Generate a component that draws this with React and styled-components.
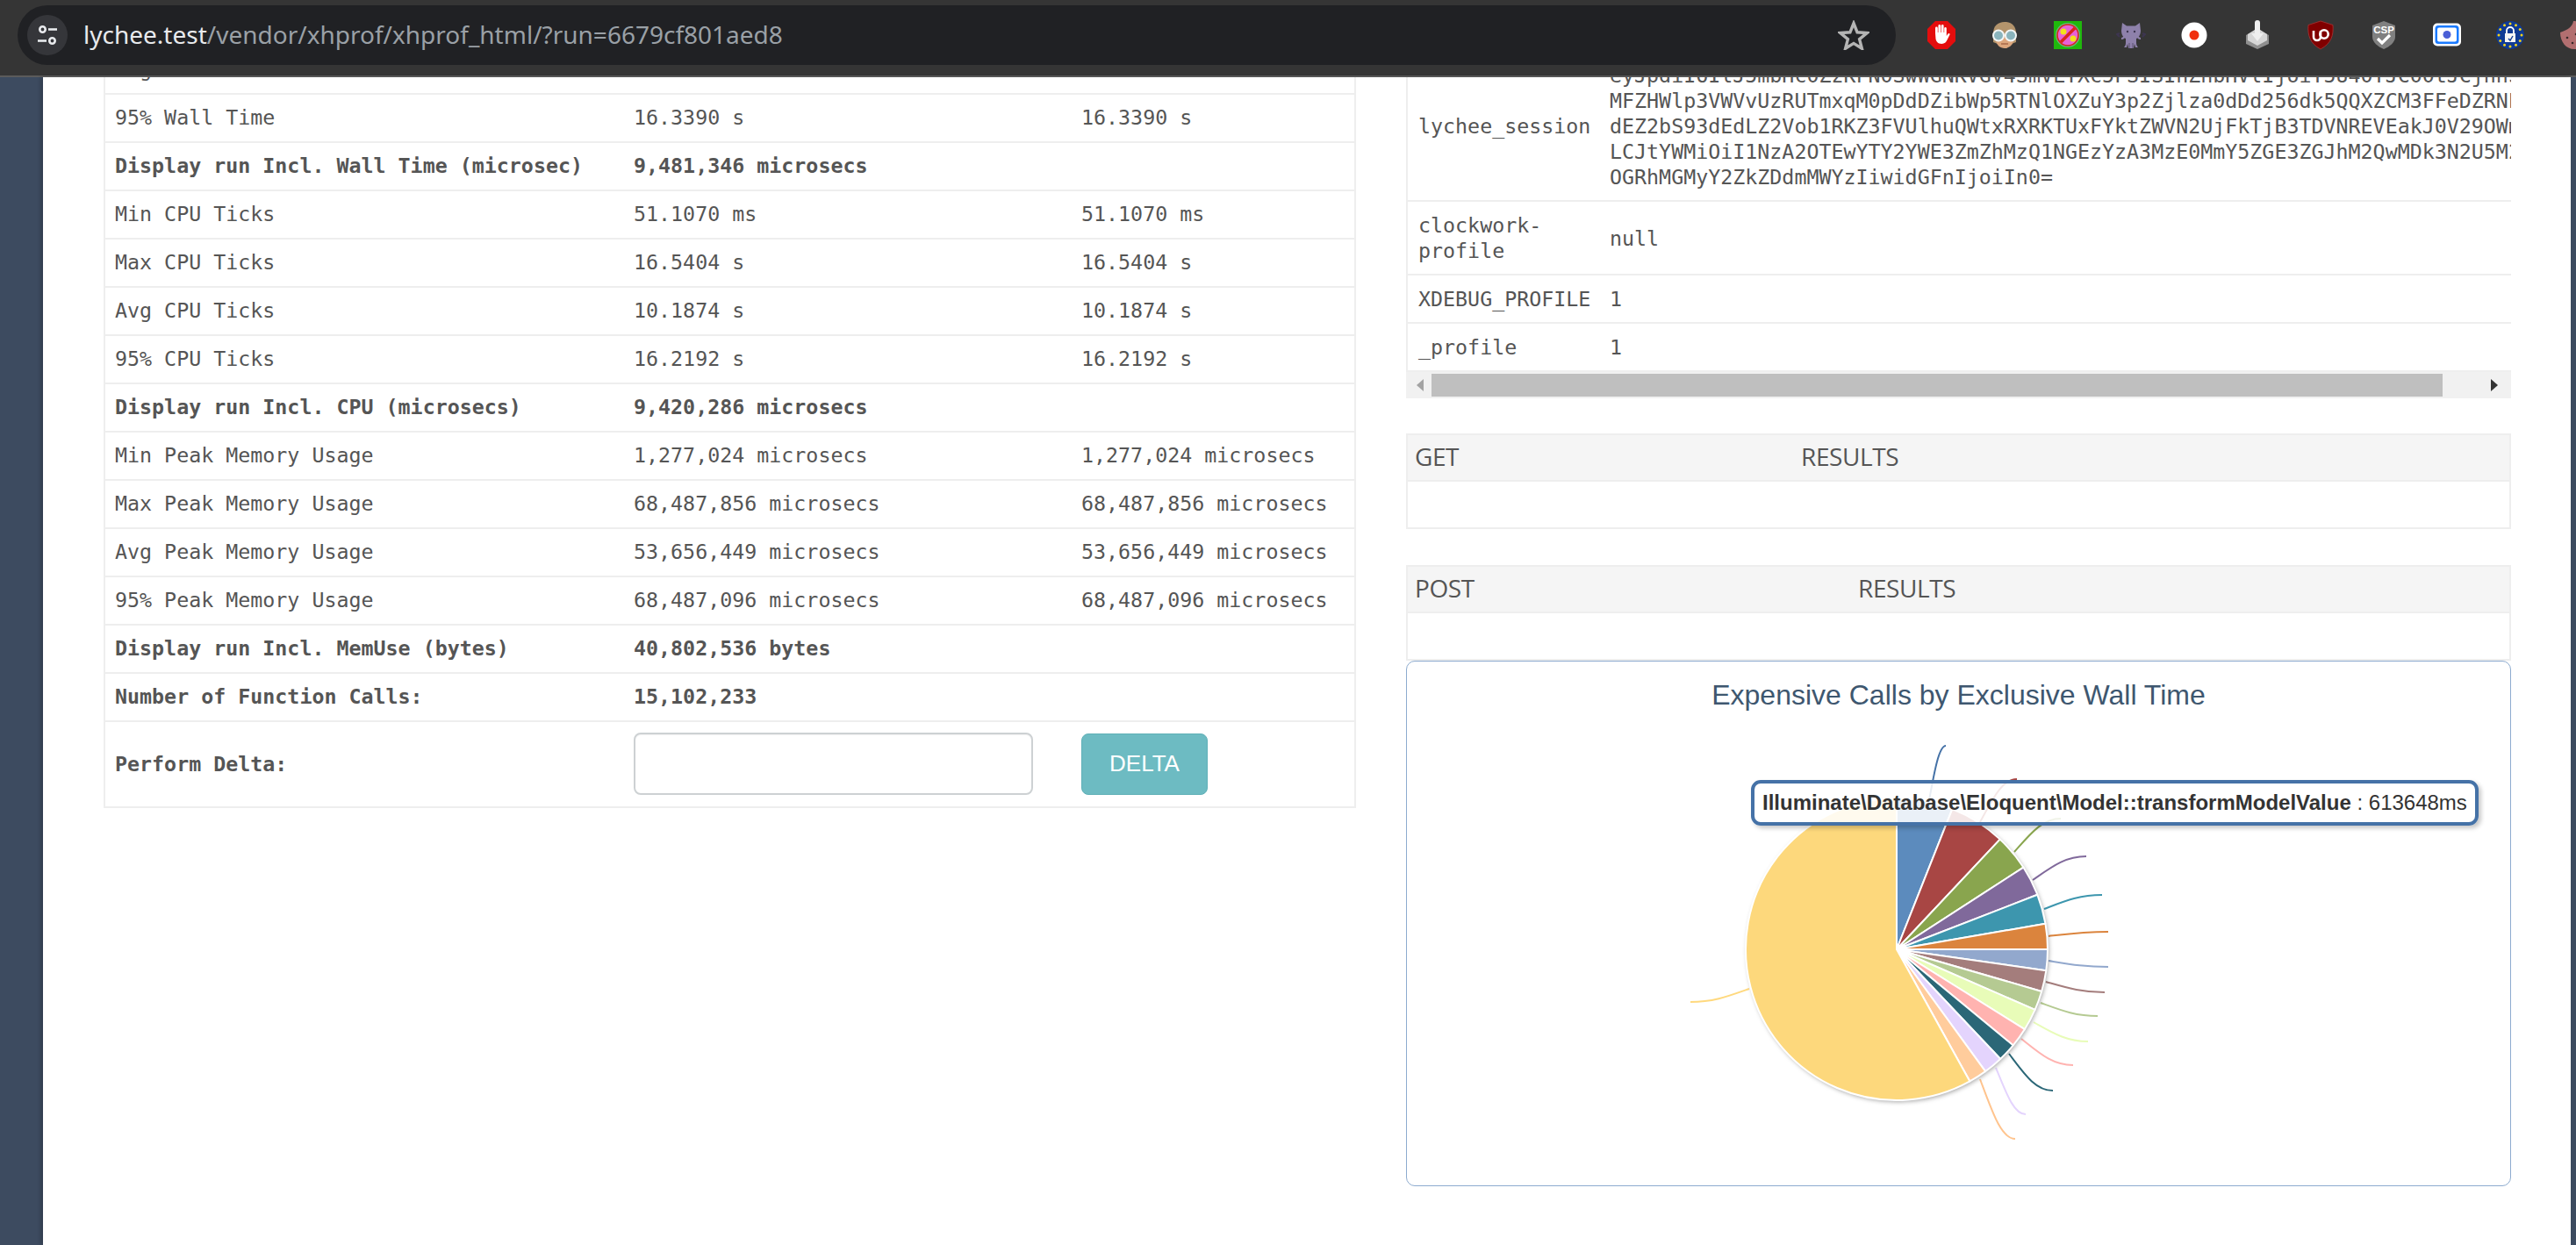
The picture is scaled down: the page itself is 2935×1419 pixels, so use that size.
import React from "react";
import styled, { createGlobalStyle } from "styled-components";

const GlobalStyle = createGlobalStyle`
  html, body { margin: 0; padding: 0; background: #fff; overflow: hidden; }
  * { box-sizing: border-box; }
`;

const MONO = `"DejaVu Sans Mono", monospace`;

const Page = styled.div`
  width: 2935px;
  height: 1419px;
  display: flex;
  flex-direction: column;
  overflow: hidden;
`;

const Toolbar = styled.div`
  height: 88px;
  flex: none;
  display: flex;
  align-items: center;
  padding: 6px 0 12px 20px;
  background: #353535;
  border-bottom: 2px solid #5b5b5b;
  overflow: hidden;
`;

const AddressBar = styled.div`
  width: 2140px;
  height: 68px;
  flex: none;
  display: flex;
  align-items: center;
  padding: 0 30px 0 11px;
  margin-right: 16px;
  border-radius: 34px;
  background: #202124;
`;

const TuneButton = styled.div`
  width: 46px;
  height: 46px;
  flex: none;
  display: flex;
  align-items: center;
  justify-content: center;
  border-radius: 50%;
  background: #35363a;
  margin-right: 18px;
`;

const Url = styled.div`
  flex: 1;
  font-family: "Noto Sans", sans-serif;
  font-size: 28px;
  color: #9aa0a6;
  white-space: nowrap;
  padding-bottom: 2px;
`;

const Host = styled.span`
  color: #e8eaed;
`;

const ExtSlot = styled.div`
  width: 72px;
  height: 40px;
  flex: none;
  display: flex;
  align-items: center;
  justify-content: center;
`;

const Main = styled.div`
  flex: 1;
  min-height: 0;
  display: flex;
  background: #3d4b60;
`;

const Content = styled.div`
  margin-left: 49px;
  margin-right: 6px;
  flex: 1;
  min-width: 0;
  display: flex;
  gap: 57px;
  padding: 0 68px 0 69px;
  background: #fff;
  box-shadow: -3px 0 4px rgba(0, 0, 0, 0.18);
  overflow: hidden;
`;

const LeftCol = styled.div`
  width: 1427px;
  flex: none;
  margin-top: -35px;
`;

const RightCol = styled.div`
  width: 1259px;
  flex: none;
  margin-top: -29px;
  display: flex;
  flex-direction: column;
`;

const Table = styled.table`
  width: 100%;
  table-layout: fixed;
  border-collapse: collapse;
  font-family: ${MONO};
  font-size: 23.3px;
  line-height: 29px;
  color: #555;
`;

const Cell = styled.td`
  padding: 11px 11px 13px;
  border: 2px solid #eee;
  border-width: 0 0 2px 0;
  font-weight: ${(p) => (p.$bold ? 700 : 400)};
  white-space: nowrap;
  vertical-align: middle;
  &:first-child { border-left-width: 2px; }
  &:last-child { border-right-width: 2px; }
`;

const Col = styled.col`
  width: ${(p) => p.$w}px;
`;

const DeltaInput = styled.input`
  display: block;
  width: 455px;
  height: 71px;
  margin-top: 1px;
  border: 2px solid #cdd1d3;
  border-radius: 8px;
  background: #fff;
  box-shadow: inset 0 1px 1px rgba(0, 0, 0, 0.06);
`;

const DeltaButton = styled.button`
  display: block;
  width: 144px;
  height: 70px;
  margin-top: 1px;
  border: 1px solid #5fb0b7;
  border-radius: 8px;
  background: #6dbbc2;
  color: #fff;
  font-family: "Liberation Sans", Arial, sans-serif;
  font-size: 26px;
`;

const SessionWrap = styled.div`
  width: 100%;
  overflow: hidden;
`;

const SessionTable = styled(Table)`
  td { padding: 12px 12px 12px 12px; white-space: normal; overflow: hidden; }
  td + td { padding-left: 0; padding-right: 0; }
  td:last-child { border-right-width: 0; }
`;

const ValueLine = styled.div`
  white-space: nowrap;
  overflow: hidden;
`;

const ScrollTrack = styled.div`
  height: 30px;
  flex: none;
  display: flex;
  align-items: center;
  padding: 0 15px 0 0;
  background: #f1f1f1;
`;

const ScrollArrow = styled.div`
  flex: none;
  width: 0;
  height: 0;
  border-top: 7px solid transparent;
  border-bottom: 7px solid transparent;
  ${(p) =>
    p.$left
      ? "border-right: 8px solid #a3a3a3; margin: 0 9px 0 12px;"
      : "border-left: 8px solid #333; margin-left: auto;"}
`;

const ScrollThumb = styled.div`
  width: 1152px;
  height: 26px;
  background: #bfbfbf;
`;

const ParamTable = styled.table`
  width: 100%;
  margin-top: ${(p) => p.$top}px;
  border-collapse: collapse;
  table-layout: fixed;
  font-family: "Open Sans", sans-serif;
  font-size: 28px;
  color: #555;
`;

const ParamHead = styled.th`
  height: 53px;
  padding: 0 0 3px 8px;
  font-weight: 400;
  text-align: left;
  background: #f5f5f5;
  border-top: 2px solid #eee;
  border-bottom: 2px solid #eee;
  letter-spacing: -0.4px;
  &:first-child { border-left: 2px solid #eee; }
  &:last-child { border-right: 2px solid #eee; padding-left: 0; }
`;

const ParamEmpty = styled.td`
  height: 54px;
  border: 2px solid #eee;
  border-top: 0;
`;

const ChartBox = styled.div`
  position: relative;
  height: 599px;
  flex: none;
  border: 1px solid #8dabcf;
  border-radius: 10px;
  overflow: hidden;
  background: #fff;
`;

const ChartTitle = styled.div`
  height: 78px;
  padding-top: 19px;
  text-align: center;
  font-family: "Liberation Sans", Arial, sans-serif;
  font-size: 32px;
  line-height: 38px;
  color: #3e576f;
`;

const ChartSvg = styled.svg`
  display: block;
  width: 1257px;
  height: 519px;
`;

const Tooltip = styled.div`
  position: absolute;
  left: 392px;
  top: 135px;
  height: 52px;
  display: flex;
  align-items: center;
  padding: 0 9px;
  border: 4px solid #4572a7;
  border-radius: 11px;
  background: rgba(255, 255, 255, 0.87);
  box-shadow: 3px 3px 5px rgba(0, 0, 0, 0.22);
  font-family: "Liberation Sans", Arial, sans-serif;
  font-size: 24px;
  color: #333;
  white-space: pre;
`;

const TipKey = styled.b`
  font-weight: 700;
`;

const wallRows = [
  ["Avg Wall Time", "10.1724 s", "10.1724 s"],
  ["95% Wall Time", "16.3390 s", "16.3390 s"],
  ["Display run Incl. Wall Time (microsec)", "9,481,346 microsecs", "", true],
  ["Min CPU Ticks", "51.1070 ms", "51.1070 ms"],
  ["Max CPU Ticks", "16.5404 s", "16.5404 s"],
  ["Avg CPU Ticks", "10.1874 s", "10.1874 s"],
  ["95% CPU Ticks", "16.2192 s", "16.2192 s"],
  ["Display run Incl. CPU (microsecs)", "9,420,286 microsecs", "", true],
  ["Min Peak Memory Usage", "1,277,024 microsecs", "1,277,024 microsecs"],
  ["Max Peak Memory Usage", "68,487,856 microsecs", "68,487,856 microsecs"],
  ["Avg Peak Memory Usage", "53,656,449 microsecs", "53,656,449 microsecs"],
  ["95% Peak Memory Usage", "68,487,096 microsecs", "68,487,096 microsecs"],
  ["Display run Incl. MemUse (bytes)", "40,802,536 bytes", "", true],
  ["Number of Function Calls:", "15,102,233", "", true],
];

const sessionLines = [
  "eyJpdiI6IlJ5mbHc0ZzKFN0SwWGNKVGV4SmVLYXc5FSISInZhbHVlIjoiY5U40YJC00tJCjhnS0",
  "MFZHWlp3VWVvUzRUTmxqM0pDdDZibWp5RTNlOXZuY3p2Zjlza0dDd256dk5QQXZCM3FFeDZRNE",
  "dEZ2bS93dEdLZ2Vob1RKZ3FVUlhuQWtxRXRKTUxFYktZWVN2UjFkTjB3TDVNREVEakJ0V29OWm",
  "LCJtYWMiOiI1NzA2OTEwYTY2YWE3ZmZhMzQ1NGEzYzA3MzE0MmY5ZGE3ZGJhM2QwMDk3N2U5M2",
  "OGRhMGMyY2ZkZDdmMWYzIiwidGFnIjoiIn0=",
];

// end = where the slice ends, clockwise from 12 o'clock
// from/to = connector start and end, in page pixels
const slices = [
  { end: 21.6, color: "#5c8bbd", line: "#4572a7", from: [2196, 923], to: [2217, 850] },
  { end: 43.2, color: "#a84644", line: "#aa4643", from: [2256, 937], to: [2298, 888] },
  { end: 57.1, color: "#89a54e", line: "#89a54e", from: [2295, 971], to: [2348, 933] },
  { end: 68.8, color: "#80699b", line: "#80699b", from: [2316, 1003], to: [2377, 976] },
  { end: 80.2, color: "#3d96ae", line: "#3d96ae", from: [2329, 1036], to: [2395, 1020] },
  { end: 90, color: "#db843d", line: "#db843d", from: [2334, 1067], to: [2402, 1062] },
  { end: 98.1, color: "#92a8cd", line: "#92a8cd", from: [2334, 1095], to: [2402, 1102] },
  { end: 106.2, color: "#a47d7c", line: "#a47d7c", from: [2331, 1119], to: [2398, 1131] },
  { end: 113.6, color: "#b5ca92", line: "#b5ca92", from: [2325, 1143], to: [2390, 1158] },
  { end: 122, color: "#e8fcb8", line: "#e8fcb8", from: [2317, 1165], to: [2379, 1187] },
  { end: 129.5, color: "#ffb3b0", line: "#ffb3b0", from: [2303, 1184], to: [2362, 1214] },
  { end: 136.6, color: "#2b6777", line: "#2b6777", from: [2289, 1201], to: [2339, 1243] },
  { end: 144, color: "#e4d4fd", line: "#e4d4fd", from: [2274, 1217], to: [2308, 1270] },
  { end: 151, color: "#ffcc9c", line: "#ffc48e", from: [2256, 1230], to: [2296, 1298] },
  { end: 360, color: "#fdd87c", line: "#ffd97e", from: [1993, 1127], to: [1926, 1142] },
];

const CX = 2161;
const CY = 1082;
const R = 172;

const rim = (deg) => {
  const a = (deg * Math.PI) / 180;
  return [CX + R * Math.sin(a), CY - R * Math.cos(a)];
};

const slicePath = (start, end) => {
  const [x1, y1] = rim(start);
  const [x2, y2] = rim(end);
  return `M${CX} ${CY}L${x1} ${y1}A${R} ${R} 0 ${end - start > 180 ? 1 : 0} 1 ${x2} ${y2}Z`;
};

const connector = ([x1, y1], [x2, y2]) => {
  const dx = x2 - x1;
  const dy = y2 - y1;
  return `M${x1} ${y1}C${x1 + dx * 0.35} ${y1 + dy * 0.55} ${x2 - dx * 0.4} ${y2} ${x2} ${y2}`;
};

const PieChart = () => {
  let start = 0;
  return (
    <ChartSvg viewBox="1603 832 1257 519">
      <defs>
        <filter id="pieShadow" x="-10%" y="-10%" width="120%" height="120%">
          <feDropShadow dx="1.5" dy="2" stdDeviation="2.5" floodColor="#000" floodOpacity="0.35" />
        </filter>
      </defs>
      {slices.map((s) => (
        <path key={s.end} d={connector(s.from, s.to)} fill="none" stroke={s.line} strokeWidth="2" />
      ))}
      <circle cx={CX} cy={CY} r={R} fill="#fff" filter="url(#pieShadow)" />
      {slices.map((s) => {
        const d = slicePath(start, s.end);
        start = s.end;
        return <path key={s.end} d={d} fill={s.color} stroke="#fff" strokeWidth="2" strokeLinejoin="round" />;
      })}
    </ChartSvg>
  );
};

const TuneIcon = () => (
  <svg width="26" height="26" viewBox="0 0 26 26" fill="none" stroke="#e8eaed" strokeWidth="2.6">
    <circle cx="7.5" cy="6.5" r="3.2" />
    <path d="M14 6.5h10" />
    <path d="M2 19.5h10" />
    <circle cx="18.5" cy="19.5" r="3.2" />
  </svg>
);

const StarIcon = () => (
  <svg width="36" height="34" viewBox="0 0 36 34" fill="none" stroke="#b4b4b4" strokeWidth="3.4" strokeLinejoin="miter">
    <path d="M18 3.5l4.1 10.3 11 .8-8.5 7 2.8 10.7L18 26.4l-9.4 5.9 2.8-10.7-8.5-7 11-.8z" />
  </svg>
);

const Ext = ({ children }) => (
  <ExtSlot>
    <svg width="34" height="34" viewBox="0 0 34 34">
      {children}
    </svg>
  </ExtSlot>
);

const AdblockIcon = () => (
  <Ext>
    <path d="M10 1h14l9 9v14l-9 9H10l-9-9V10z" fill="#e40d0d" />
    <path
      d="M10 15V9a1.4 1.4 0 0 1 2.8 0v5h.6V6.5a1.4 1.4 0 0 1 2.8 0V14h.6V6.5a1.4 1.4 0 0 1 2.8 0V14h.6V9a1.4 1.4 0 0 1 2.6 0v9l1.6-2.4c1-1.4 2.8-.4 2.1 1l-3 6c-1.1 2.6-3 4.4-6.2 4.4-4.2 0-6.9-2.8-6.9-7z"
      fill="#fff"
    />
  </Ext>
);

const FaceIcon = () => (
  <Ext>
    <path d="M4 25V15C4 7 9 2 17 2s13 5 13 13v10l-5 2H9z" fill="#b3946c" />
    <path d="M7 16h20v6c0 6-5 10-10 10S7 28 7 22z" fill="#dca67d" />
    <path d="M13 27h8" stroke="#a8694a" strokeWidth="1.5" />
    <circle cx="10" cy="17.5" r="6" fill="#8ab4bd" stroke="#f3f6f6" strokeWidth="2" />
    <circle cx="24" cy="17.5" r="6" fill="#8ab4bd" stroke="#f3f6f6" strokeWidth="2" />
  </Ext>
);

const RainbowIcon = () => (
  <Ext>
    <rect x="1" y="1" width="32" height="32" fill="#1fb80c" />
    <circle cx="17" cy="17" r="14" fill="#62b77e" />
    <circle cx="17" cy="17" r="11.5" fill="#e860d8" />
    <circle cx="12" cy="13" r="3.5" fill="#f2e21a" />
    <circle cx="23" cy="21" r="3.5" fill="#f2e21a" />
    <path d="M9 25L25 9" stroke="#d9241c" strokeWidth="3.5" />
    <circle cx="17" cy="17" r="12" fill="none" stroke="#d9241c" strokeWidth="1.6" />
  </Ext>
);

const CatIcon = () => (
  <Ext>
    <path d="M4 15l-3 1 3 3M30 15l3 1-3 3" stroke="#3d3550" strokeWidth="2" fill="none" />
    <path
      d="M7 3l5 3.5h10L27 3l1 9c0 6-4 9-5 9v5c0 2 1 4 2 5h-3l-1-4-1 5h-6l-1-5-1 4H9c1-1 2-3 2-5v-5c-1 0-5-3-5-9z"
      fill="#8e81ab"
    />
    <path d="M6 21c2 0 3-1 4-3M28 21c-2 0-3-1-4-3" stroke="#8e81ab" strokeWidth="2" fill="none" />
    <circle cx="13" cy="13" r="1.2" fill="#3d3550" />
    <circle cx="21" cy="13" r="1.2" fill="#3d3550" />
    <path d="M15 26v6M19 26v6" stroke="#5a5070" strokeWidth="1" />
  </Ext>
);

const RecordIcon = () => (
  <Ext>
    <circle cx="17" cy="17" r="14.5" fill="#fff" />
    <circle cx="17" cy="17" r="5.5" fill="#f0300f" />
  </Ext>
);

const DownloadIcon = () => (
  <Ext>
    <path d="M17 10L30 17v10l-13 6L4 27V17z" fill="#8f8f8f" />
    <path d="M17 9L28 16v7l-11 6L6 23v-7z" fill="#d6d6d6" />
    <path d="M14 3a3 3 0 0 1 6 0v12h4l-7 9-7-9h4z" fill="#efefef" />
  </Ext>
);

const UblockIcon = () => (
  <Ext>
    <path d="M17 1l14 4.5c1 12-2 21-14 27.5C5 26.5 2 17.5 3 5.5z" fill="#800000" stroke="#a33" strokeWidth="0.8" />
    <path d="M9 12v7a4 4 0 0 0 8 0v-7" fill="none" stroke="#fff" strokeWidth="2.6" />
    <circle cx="21" cy="16" r="4.7" fill="none" stroke="#fff" strokeWidth="2.6" />
  </Ext>
);

const CspIcon = () => (
  <Ext>
    <path d="M17 1l13 5v13c0 6-6 11-13 14C10 30 4 25 4 19V6z" fill="#808080" />
    <text x="17" y="15" textAnchor="middle" fontFamily="Liberation Sans, Arial, sans-serif" fontWeight="700" fontSize="11.5" fill="#fff">
      CSP
    </text>
    <path d="M10 21l5 5 9-9" fill="none" stroke="#fff" strokeWidth="3.2" />
  </Ext>
);

const WindowIcon = () => (
  <Ext>
    <rect x="1" y="3.5" width="32" height="26" rx="5" fill="#fff" />
    <rect x="3.5" y="6" width="27" height="21" rx="3.5" fill="#1a7aff" />
    <rect x="6" y="8.5" width="22" height="16" rx="2" fill="#fff" />
    <circle cx="17" cy="16.5" r="4.5" fill="#4b5fd6" />
  </Ext>
);

const euStars = Array.from({ length: 12 }, (_, i) => (i * Math.PI) / 6);

const EuIcon = () => (
  <Ext>
    <circle cx="17" cy="17" r="16" fill="#0f3a94" />
    {euStars.map((a) => (
      <circle key={a} cx={17 + 13 * Math.sin(a)} cy={17 - 13 * Math.cos(a)} r="1.5" fill="#f2d21a" />
    ))}
    <path d="M13 15v-3a4 4 0 0 1 8 0v3" fill="none" stroke="#fff" strokeWidth="1.8" />
    <rect x="11" y="15" width="12" height="10" fill="#f4f4f4" />
    <path d="M15 21l2 2 3-5" fill="none" stroke="#0f3a94" strokeWidth="1.4" />
  </Ext>
);

const CookieIcon = () => (
  <Ext>
    <path d="M17 1c-1 6-6 10-15 13C2 25 9 33 18 33s16-7 16-16S26 1 17 1z" fill="#b26f70" />
    <circle cx="10" cy="20" r="1.3" fill="#3a2a2a" />
    <circle cx="16" cy="26" r="1.3" fill="#3a2a2a" />
    <circle cx="20" cy="16" r="1.3" fill="#3a2a2a" />
  </Ext>
);

const ParamBlock = ({ name, first, top }) => (
  <ParamTable $top={top}>
    <colgroup>
      <Col $w={first} />
      <col />
    </colgroup>
    <thead>
      <tr>
        <ParamHead>{name}</ParamHead>
        <ParamHead>RESULTS</ParamHead>
      </tr>
    </thead>
    <tbody>
      <tr>
        <ParamEmpty colSpan={2} />
      </tr>
    </tbody>
  </ParamTable>
);

export default function App() {
  return (
    <Page>
      <GlobalStyle />
      <Toolbar>
        <AddressBar>
          <TuneButton>
            <TuneIcon />
          </TuneButton>
          <Url>
            <Host>lychee.test</Host>/vendor/xhprof/xhprof_html/?run=6679cf801aed8
          </Url>
          <StarIcon />
        </AddressBar>
        <AdblockIcon />
        <FaceIcon />
        <RainbowIcon />
        <CatIcon />
        <RecordIcon />
        <DownloadIcon />
        <UblockIcon />
        <CspIcon />
        <WindowIcon />
        <EuIcon />
        <CookieIcon />
      </Toolbar>
      <Main>
        <Content>
          <LeftCol>
            <Table>
              <colgroup>
                <Col $w={592} />
                <Col $w={510} />
                <col />
              </colgroup>
              <tbody>
                {wallRows.map(([label, a, b, bold]) => (
                  <tr key={label}>
                    <Cell $bold={bold}>{label}</Cell>
                    <Cell $bold={bold}>{a}</Cell>
                    <Cell>{b}</Cell>
                  </tr>
                ))}
                <tr>
                  <Cell $bold>Perform Delta:</Cell>
                  <Cell>
                    <DeltaInput />
                  </Cell>
                  <Cell>
                    <DeltaButton>DELTA</DeltaButton>
                  </Cell>
                </tr>
              </tbody>
            </Table>
          </LeftCol>
          <RightCol>
            <SessionWrap>
              <SessionTable>
                <colgroup>
                  <Col $w={231} />
                  <col />
                </colgroup>
                <tbody>
                  <tr>
                    <Cell>lychee_session</Cell>
                    <Cell>
                      {sessionLines.map((line) => (
                        <ValueLine key={line}>{line}</ValueLine>
                      ))}
                    </Cell>
                  </tr>
                  <tr>
                    <Cell>clockwork-profile</Cell>
                    <Cell>null</Cell>
                  </tr>
                  <tr>
                    <Cell>XDEBUG_PROFILE</Cell>
                    <Cell>1</Cell>
                  </tr>
                  <tr>
                    <Cell>_profile</Cell>
                    <Cell>1</Cell>
                  </tr>
                </tbody>
              </SessionTable>
            </SessionWrap>
            <ScrollTrack>
              <ScrollArrow $left />
              <ScrollThumb />
              <ScrollArrow />
            </ScrollTrack>
            <ParamBlock name="GET" first={449} top={40} />
            <ParamBlock name="POST" first={514} top={41} />
            <ChartBox>
              <ChartTitle>Expensive Calls by Exclusive Wall Time</ChartTitle>
              <PieChart />
              <Tooltip>
                <TipKey>Illuminate\Database\Eloquent\Model::transformModelValue</TipKey> : 613648ms
              </Tooltip>
            </ChartBox>
          </RightCol>
        </Content>
      </Main>
    </Page>
  );
}
